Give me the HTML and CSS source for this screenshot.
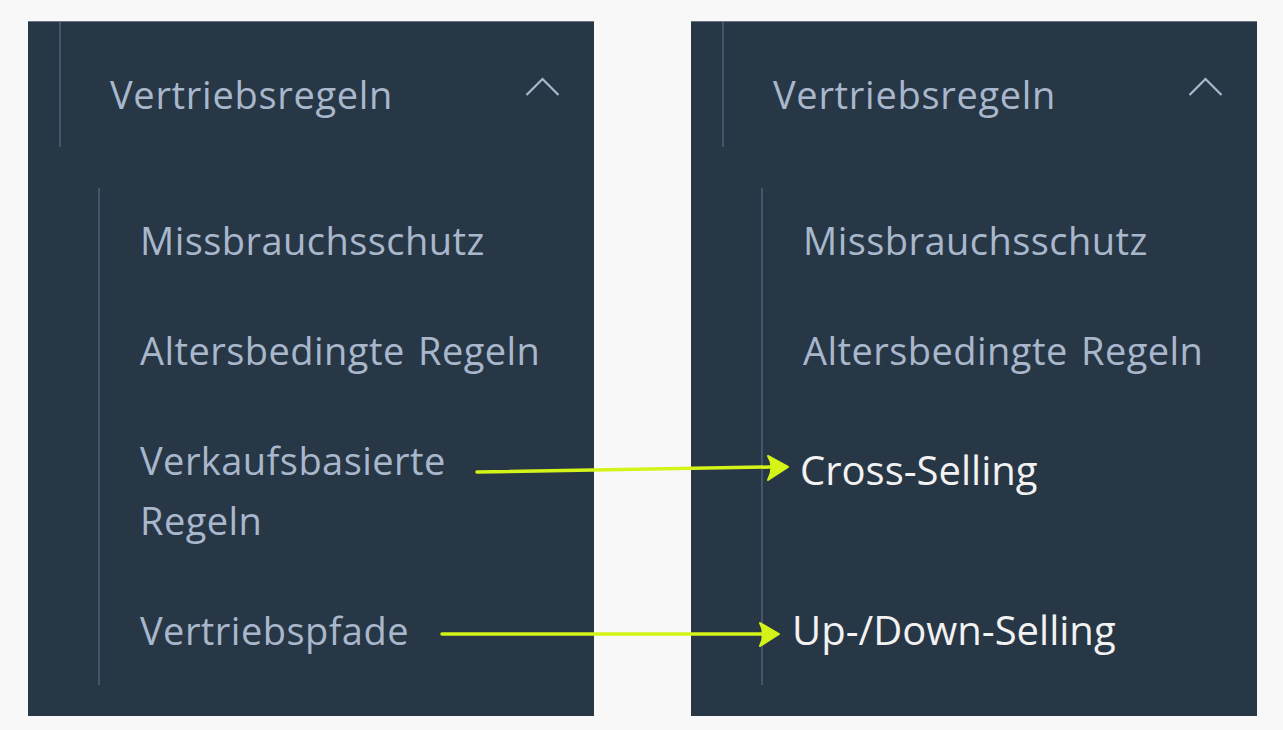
FILE: index.html
```html
<!DOCTYPE html>
<html lang="de">
<head>
<meta charset="utf-8">
<title>Vertriebsregeln</title>
<link rel="stylesheet" href="styles.css">
</head>
<body>
<div class="stage">
  <section class="panel">
    <div class="head">
      <span class="head-label">Vertriebsregeln</span>
      <svg class="chev" width="35" height="20" viewBox="0 0 35 20"><path d="M1.5 18 L17.5 2 L33.5 18" fill="none" stroke="#a9b8cd" stroke-width="2.2"/></svg>
    </div>
    <ul class="sub">
      <li class="item">Missbrauchsschutz</li>
      <li class="item">Altersbedingte Regeln</li>
      <li class="item item-wrap">Verkaufsbasierte<br>Regeln</li>
      <li class="item">Vertriebspfade</li>
    </ul>
  </section>
  <section class="panel">
    <div class="head">
      <span class="head-label">Vertriebsregeln</span>
      <svg class="chev" width="35" height="20" viewBox="0 0 35 20"><path d="M1.5 18 L17.5 2 L33.5 18" fill="none" stroke="#a9b8cd" stroke-width="2.2"/></svg>
    </div>
    <ul class="sub">
      <li class="item">Missbrauchsschutz</li>
      <li class="item">Altersbedingte Regeln</li>
      <li class="item new new-cross">Cross-Selling</li>
      <li class="item new new-updown">Up-/Down-Selling</li>
    </ul>
  </section>
  <svg class="arrows" width="1283" height="730" viewBox="0 0 1283 730">
    <path d="M477 472 L770 467" stroke="#d4f417" stroke-width="3.5" fill="none" stroke-linecap="round"/>
    <path d="M788 467 L768 456 Q775 467 768 480 Z" fill="#d4f417" stroke="#d4f417" stroke-width="2" stroke-linejoin="round"/>
    <path d="M442 634 L762 634" stroke="#d4f417" stroke-width="3.5" fill="none" stroke-linecap="round"/>
    <path d="M779 634 L760 623 Q766 634 760 646 Z" fill="#d4f417" stroke="#d4f417" stroke-width="2" stroke-linejoin="round"/>
  </svg>
</div>
</body>
</html>
```

FILE: styles.css
```css
html, body {
  margin: 0;
  padding: 0;
  background: #f8f8f8;
}

.stage {
  position: relative;
  width: 1283px;
  height: 730px;
  display: flex;
  gap: 97px;
  padding: 21px 0 0 28px;
  box-sizing: border-box;
}

.panel {
  width: 566px;
  height: 695px;
  background: #283746;
  border-top: 1px solid #6b7480;
  box-sizing: border-box;
  font-family: "Open Sans", "Noto Sans", sans-serif;
  color: #a8b7cc;
}

.head {
  margin-left: 31px;
  height: 125px;
  border-left: 2px solid #46566a;
  display: flex;
  align-items: flex-start;
  padding: 42px 34px 0 49px;
  box-sizing: border-box;
}

.head-label {
  flex: 1;
  font-size: 38px;
  line-height: 60px;
  letter-spacing: 0.7px;
}

.chev {
  margin-top: 13px;
}

.sub {
  list-style: none;
  margin: 41px 0 0 70px;
  padding: 22px 0 0 40px;
  height: 497px;
  box-sizing: border-box;
  border-left: 2px solid #46566a;
  display: flex;
  flex-direction: column;
  gap: 50px;
}

.item {
  font-size: 38px;
  line-height: 60px;
  letter-spacing: 0.45px;
  word-spacing: 3px;
}

.new {
  color: #f2f2f2;
  font-size: 40px;
  letter-spacing: 0;
  word-spacing: 0;
}

.new-cross {
  margin-top: 10px;
  margin-left: -3px;
}

.new-updown {
  margin-top: 50px;
  margin-left: -11px;
}

.arrows {
  position: absolute;
  left: 0;
  top: 0;
  pointer-events: none;
}
```
